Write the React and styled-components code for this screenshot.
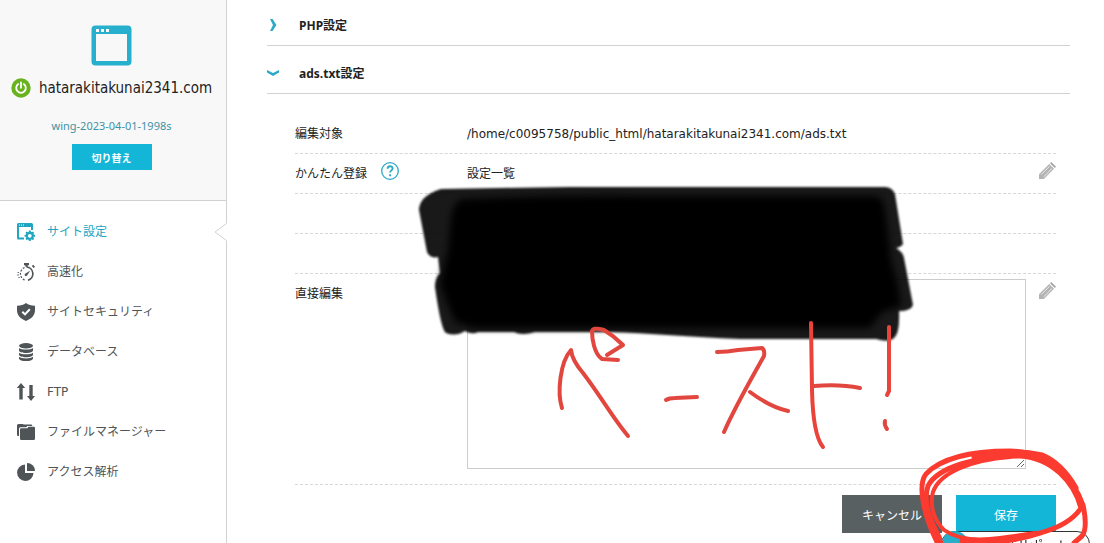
import React, { useState } from "react";
import styled, { createGlobalStyle } from "styled-components";

const GlobalStyle = createGlobalStyle`
  * {
    box-sizing: border-box;
  }

  body {
    margin: 0;
    background-color: #fff;
    color: #222;
    font-family: "DejaVu Sans", "Noto Sans CJK JP", sans-serif;
    font-size: 12px;
    line-height: 20px;
  }

  button,
  textarea {
    font-family: inherit;
  }
`;

const Page = styled.div`
  position: relative;
  display: flex;
  min-height: 100vh;
  overflow: hidden;
`;

const Sidebar = styled.aside`
  flex: 0 0 227px;
  border-right: 1px solid #d2d2d2;
`;

const SiteCard = styled.div`
  display: flex;
  flex-direction: column;
  align-items: center;
  padding: 25px 3px 30px 0;
  background-color: #f8f8f8;
  border-bottom: 1px solid #d2d2d2;
`;

const SiteName = styled.div`
  display: flex;
  align-items: center;
  gap: 8px;
  margin-top: 12px;
  font-family: "DejaVu Sans Condensed", sans-serif;
  font-size: 15px;
`;

const ServerName = styled.a`
  margin: 18px 0 8px;
  color: #3f93a6;
  font-family: "Noto Sans", sans-serif;
  font-size: 11px;
  text-decoration: none;
`;

const SwitchButton = styled.button`
  width: 80px;
  height: 26px;
  padding: 0;
  border: none;
  background-color: #14b6d8;
  color: #fff;
  font-size: 10px;
  font-weight: bold;
  cursor: pointer;
`;

const Menu = styled.nav`
  display: flex;
  flex-direction: column;
  padding-top: 11px;
`;

const MenuLink = styled.a`
  position: relative;
  display: flex;
  align-items: center;
  gap: 12px;
  height: 40px;
  padding-left: 17px;
  color: ${(props) => (props.$active ? "#21a6c1" : "#4f5557")};
  text-decoration: none;
`;

const Notch = styled.svg`
  position: absolute;
  top: 11px;
  right: -1px;
`;

const Main = styled.main`
  flex: 1;
  min-width: 0;
  padding: 0 34px 10px 40px;
`;

const SectionTitle = styled.h2`
  margin: 0;
  border-bottom: 1px solid #d2d2d2;
`;

const SectionToggle = styled.button`
  display: flex;
  align-items: center;
  gap: 20px;
  width: 100%;
  height: ${(props) => (props.$first ? "45px" : "47px")};
  padding: ${(props) => (props.$first ? "4px 0 0" : "6px 0 0")};
  border: none;
  background: none;
  color: #222;
  font-family: "Noto Sans", "Noto Sans CJK JP", sans-serif;
  font-size: 12px;
  font-weight: bold;
  text-align: left;
  cursor: pointer;
`;

const Form = styled.form`
  padding: 20px 14px 0 28px;
`;

const Row = styled.div`
  display: flex;
  align-items: flex-start;
  min-height: 40px;
  border-bottom: 1px dashed #d6d6d6;
`;

const RowLabel = styled.div`
  display: flex;
  align-items: center;
  flex: 0 0 172px;
  gap: 14px;
  height: 39px;
`;

const RowValue = styled.div`
  display: flex;
  align-items: center;
  flex: 1;
  min-width: 0;
  min-height: 39px;
`;

const EditArea = styled.textarea`
  display: block;
  width: 100%;
  height: 190px;
  margin: 5px 0 15px;
  border: 1px solid #ccc;
  background-color: #fff;
  font-size: 12px;
  outline: none;
`;

const IconButton = styled.button`
  display: flex;
  align-items: center;
  justify-content: flex-end;
  flex: 0 0 30px;
  height: 34px;
  padding: 0;
  border: none;
  background: none;
  cursor: pointer;
`;

const HelpButton = styled(IconButton)`
  flex: 0 0 18px;
  align-items: flex-start;
  height: 24px;
`;

const Actions = styled.div`
  display: flex;
  justify-content: flex-end;
  gap: 14px;
  padding-top: 10px;
`;

const ActionButton = styled.button`
  width: 100px;
  height: 38px;
  padding: 0;
  border: none;
  background-color: ${(props) => (props.$primary ? "#14b6d8" : "#586062")};
  color: #fff;
  font-size: 12px;
  cursor: pointer;
`;

const SupportButton = styled.button`
  position: fixed;
  right: 14px;
  bottom: -14px;
  display: flex;
  align-items: center;
  gap: 10px;
  height: 26px;
  padding: 0 20px 0 0;
  border: 1px solid #333;
  border-radius: 13px;
  background-color: #fff;
  color: #222;
  font-size: 13px;
  cursor: pointer;
`;

const SupportDot = styled.span`
  width: 26px;
  height: 26px;
  border-radius: 50%;
  background-color: #27aeca;
`;

const Marker = styled.svg`
  position: absolute;
  top: 0;
  left: 0;
  z-index: 2;
  pointer-events: none;
`;

const Svg = ({ children, size = 18 }) => (
  <svg width={size} height={size} viewBox="0 0 18 18" fill="currentColor" aria-hidden="true">
    {children}
  </svg>
);

const WindowIcon = () => (
  <svg width="41" height="41" viewBox="0 0 41 41" aria-hidden="true">
    <rect x="0.5" y="0.5" width="40" height="40" rx="4" fill="#27b0ce" />
    <rect x="5" y="9" width="31" height="27" fill="#f8f8f8" />
    <path d="M5 4h3v3H5zM10 4h3v3h-3zM15 4h3v3h-3z" fill="#f8f8f8" />
  </svg>
);

const PowerIcon = () => (
  <svg width="20" height="20" viewBox="0 0 20 20" fill="none" aria-hidden="true">
    <circle cx="10" cy="10" r="9.7" fill="#68b21d" />
    <path
      d="M7.2 6.1a4.8 4.8 0 1 0 5.6 0M10 4.4v5.4"
      stroke="#fff"
      strokeWidth="1.8"
      strokeLinecap="round"
    />
  </svg>
);

const SettingIcon = () => (
  <Svg>
    <path
      fillRule="evenodd"
      d="M1.5 0h13A1.5 1.5 0 0 1 16 1.500V7h-2V4H2v10.500h5v2H1.500A1.500 1.500 0 0 1 0 15V1.500A1.500 1.500 0 0 1 1.500 0zM2 1.500v1h1v-1zM4 1.500v1h1v-1zM6 1.500v1h1v-1z"
    />
    <circle cx="12.800" cy="12.800" r="3" fill="none" stroke="currentColor" strokeWidth="2.200" />
    <path
      d="M12.800 7.600v2M12.800 16v2M7.600 12.800h2M16 12.800h2M9.100 9.100l1.400 1.400M15.100 15.100l1.400 1.400M16.500 9.100l-1.400 1.400M10.500 15.100l-1.400 1.400"
      stroke="currentColor"
      strokeWidth="2"
    />
  </Svg>
);

const SpeedIcon = () => (
  <Svg>
    <path d="M7 0h5v2.200h-1.300v1.600H8.300V2.200H7zM14.800 3l1.400-1.200 1.800 2-1.400 1.200z" />
    <path
      d="M9.500 4a6.800 6.800 0 0 1 1.500 13.300"
      fill="none"
      stroke="currentColor"
      strokeWidth="1.700"
    />
    <path
      d="M7.500 4.500a6.800 6.800 0 0 0 1 12.800"
      fill="none"
      stroke="currentColor"
      strokeWidth="1.200"
      strokeDasharray="2 1.400"
    />
    <path d="M0.500 9.500H2M0 12h2M1.300 14.500h1.500" stroke="currentColor" strokeWidth="0.800" />
    <path d="M13.300 7.600l-3.100 4.600a1.300 1.300 0 1 1-1.600-1.600z" />
  </Svg>
);

const SecurityIcon = () => (
  <Svg>
    <path d="M9 0c2.500 1.800 5 2.700 9 2.800v4.500c0 5-3.500 8.500-9 10.700-5.500-2.200-9-5.700-9-10.700V2.800C4 2.700 6.500 1.800 9 0z" />
    <path d="M5.300 8.700l2.700 2.700 4.800-5.200" fill="none" stroke="#fff" strokeWidth="2" />
  </Svg>
);

const DatabaseIcon = () => (
  <Svg>
    <ellipse cx="9" cy="2.800" rx="7" ry="2.700" />
    <path d="M2 4.900c2.500 2.100 11.500 2.100 14 0v2.700c0 3.300-14 3.300-14 0z" />
    <path d="M2 9.700c2.500 2.100 11.500 2.100 14 0v2.100c0 3.300-14 3.300-14 0z" />
    <path d="M2 13.800c2.500 2.100 11.500 2.100 14 0v1.600c0 3.400-14 3.400-14 0z" />
  </Svg>
);

const FtpIcon = () => (
  <Svg>
    <path d="M4 0l4.200 5H5.700v11.500H2.300V5H-.2zM12.300 2h3.400v11H18l-4 5-4-5h2.300z" />
  </Svg>
);

const FileIcon = () => (
  <Svg>
    <path d="M1.500 1h4.200l1 .6H14a1.300 1.300 0 0 1 1.300 1.300V3h-5l-1 1.200H3.500A1.500 1.500 0 0 0 2 5.700V13h-.8A1.200 1.200 0 0 1 0 11.800V2.500A1.500 1.500 0 0 1 1.500 1z" />
    <path d="M4.300 5.300h6l1.200-1.500h5.200A1.300 1.300 0 0 1 18 5.100v10.600a1.300 1.300 0 0 1-1.300 1.300H4.300A1.300 1.300 0 0 1 3 15.700V6.600a1.300 1.300 0 0 1 1.300-1.300z" />
  </Svg>
);

const PieIcon = () => (
  <Svg>
    <path d="M8 1.500V10h8.500A8.200 8.200 0 1 1 8 1.500z" />
    <path d="M10 0a8 8 0 0 1 8 8h-8z" />
  </Svg>
);

const HelpIcon = () => (
  <svg width="18" height="18" viewBox="0 0 18 18" fill="none" stroke="#2ba9c5" aria-hidden="true">
    <circle cx="9" cy="9" r="8.300" strokeWidth="1.300" />
    <path
      d="M6.600 6.800c0-3.400 5-3.200 5-.3 0 1.900-2.500 1.900-2.500 4.100M9.100 12.200v2"
      strokeWidth="1.900"
    />
  </svg>
);

const PencilIcon = () => (
  <svg width="18" height="18" viewBox="0 0 18 18" aria-hidden="true">
    <path d="M1 12.200L11.200 2l4.800 4.800L5.800 17H1z" fill="#b3b3b3" />
    <path d="M12 1.200L13.200 0 18 4.800 16.800 6z" fill="#a3a3a3" />
    <path d="M3.300 12.500l8.300-8.300M5.700 14.800l8.300-8.300" stroke="#f2f2f2" strokeWidth="0.900" />
  </svg>
);

const Chevron = ({ open }) => (
  <svg width="12" height="12" viewBox="0 0 12 12" aria-hidden="true">
    <path
      d={open ? "M0 3v2.400l6 3.600 6-3.600V3L6 6z" : "M3 0h2.600l3.800 6-3.800 6H3l3-6z"}
      fill="#2ba9c5"
    />
  </svg>
);

const menuItems = [
  { label: "サイト設定", icon: SettingIcon, active: true },
  { label: "高速化", icon: SpeedIcon },
  { label: "サイトセキュリティ", icon: SecurityIcon },
  { label: "データベース", icon: DatabaseIcon },
  { label: "FTP", icon: FtpIcon },
  { label: "ファイルマネージャー", icon: FileIcon },
  { label: "アクセス解析", icon: PieIcon },
];

// Black marker, red pen strokes and the circle around the save button
const MarkerLayer = () => (
  <Marker width="1104" height="543" viewBox="0 0 1104 543" fill="none" aria-hidden="true">
    <defs>
      <filter id="soft" x="-5%" y="-10%" width="110%" height="120%">
        <feGaussianBlur stdDeviation="1.200" />
      </filter>
      <filter id="softer" x="-5%" y="-10%" width="110%" height="120%">
        <feGaussianBlur stdDeviation="3.500" />
      </filter>
    </defs>
    <path
      d="M441 189L570 187H885Q892 187 895 194L903 244Q901 247 896 248Q903 252 904 258L913 305Q911 311 899 311Q900 333 894 338Q889 343 876 339H740C690 337 650 333 610 332H535Q522 336 514 332H478Q472 335 465 331Q456 337 446 333Q441 330 435 287Q435 278 440 273L438 257Q430 259 427 252L419 210Q419 196 441 189Z"
      fill="#000"
      fillOpacity="0.900"
      filter="url(#soft)"
    />
    <path
      d="M462 199Q560 195 640 196H874Q884 197 885 210L890 250V256L898 285L901 306L882 312L870 328H475L455 322L446 300L440 284L448 250L451 217Q454 202 462 199Z"
      fill="#000"
      filter="url(#softer)"
    />
    <g stroke="#e2473f" strokeWidth="4" strokeLinecap="round" strokeLinejoin="round">
      <path d="M562 408C557 393 560 362 571 350Q572 360 583 373C600 395 612 417 628 436" />
      <path d="M618 360L602 359C594 354 592 338 592 331Q593 327 604 330Q614 336 623 345L607 355" />
      <path d="M666 400Q669 398 675 398L697 397" />
      <path d="M717 352Q727 352 738 350L762 348Q765 350 764 356C750 381 735 407 724 432" />
      <path d="M750 392Q770 407 788 411" />
      <path d="M811 323L812 390Q813 435 823 447" stroke="#ea4339" />
      <path d="M814 386Q840 384 860 388" />
      <path d="M889 327V391L887 395" stroke="#ea4339" />
      <path d="M885 421Q884 425 887 429" />
    </g>
    <g stroke="#fb3b30" strokeLinecap="round" strokeLinejoin="round">
      <path
        d="M1035 533L1000 538Q962 543 944 530C932 518 930 503 933 492C940 472 972 460 1010 457"
        strokeWidth="4"
      />
      <path
        d="M938 544C922 512 918 484 926 474C940 459 970 451 1010 451C1048 452 1072 475 1083 505Q1088 528 1082 536L1074 543"
        strokeWidth="5"
      />
      <path
        d="M941 543C926 516 924 498 928 486C938 466 980 456 1020 456C1052 458 1074 482 1081 508Q1070 525 1040 533Q1000 546 962 541"
        strokeWidth="5"
      />
      <path d="M924 500Q929 520 939 538" strokeWidth="6" />
      <path d="M975 457Q1010 449 1042 456Q1061 464 1075 488" strokeWidth="7" />
    </g>
  </Marker>
);

const App = () => {
  const [phpOpen, setPhpOpen] = useState(false);
  const [text, setText] = useState("");

  return (
    <>
      <GlobalStyle />
      <Page>
        <Sidebar>
          <SiteCard>
            <WindowIcon />
            <SiteName>
              <PowerIcon />
              hatarakitakunai2341.com
            </SiteName>
            <ServerName href="#server">wing-2023-04-01-1998s</ServerName>
            <SwitchButton type="button">切り替え</SwitchButton>
          </SiteCard>
          <Menu>
            {menuItems.map(({ label, icon: Icon, active }) => (
              <MenuLink key={label} href="#menu" $active={active}>
                <Icon />
                {label}
                {active && (
                  <Notch width="13" height="18" viewBox="0 0 13 18" aria-hidden="true">
                    <path d="M13 0L1 9l12 9z" fill="#fff" />
                    <path d="M12.500 0.500L1 9l11.500 8.500" fill="none" stroke="#d2d2d2" />
                  </Notch>
                )}
              </MenuLink>
            ))}
          </Menu>
        </Sidebar>

        <Main>
          <SectionTitle>
            <SectionToggle $first aria-expanded={phpOpen} onClick={() => setPhpOpen(!phpOpen)}>
              <Chevron open={phpOpen} />
              PHP設定
            </SectionToggle>
          </SectionTitle>
          <SectionTitle>
            <SectionToggle aria-expanded="true">
              <Chevron open />
              ads.txt設定
            </SectionToggle>
          </SectionTitle>

          <Form onSubmit={(e) => e.preventDefault()}>
            <Row>
              <RowLabel>編集対象</RowLabel>
              <RowValue>/home/c0095758/public_html/hatarakitakunai2341.com/ads.txt</RowValue>
            </Row>
            <Row>
              <RowLabel>
                かんたん登録
                <HelpButton type="button" aria-label="ヘルプ">
                  <HelpIcon />
                </HelpButton>
              </RowLabel>
              <RowValue>設定一覧</RowValue>
              <IconButton type="button" aria-label="かんたん登録を編集">
                <PencilIcon />
              </IconButton>
            </Row>
            <Row />
            <Row />
            <Row>
              <RowLabel as="label" htmlFor="direct-edit">
                直接編集
              </RowLabel>
              <RowValue>
                <EditArea
                  id="direct-edit"
                  value={text}
                  onChange={(e) => setText(e.target.value)}
                />
              </RowValue>
              <IconButton type="button" aria-label="直接編集を編集">
                <PencilIcon />
              </IconButton>
            </Row>
            <Actions>
              <ActionButton type="button">キャンセル</ActionButton>
              <ActionButton type="submit" $primary>
                保存
              </ActionButton>
            </Actions>
          </Form>
        </Main>

        <SupportButton type="button">
          <SupportDot />
          お客様サポート
        </SupportButton>
        <MarkerLayer />
      </Page>
    </>
  );
};

export default App;
